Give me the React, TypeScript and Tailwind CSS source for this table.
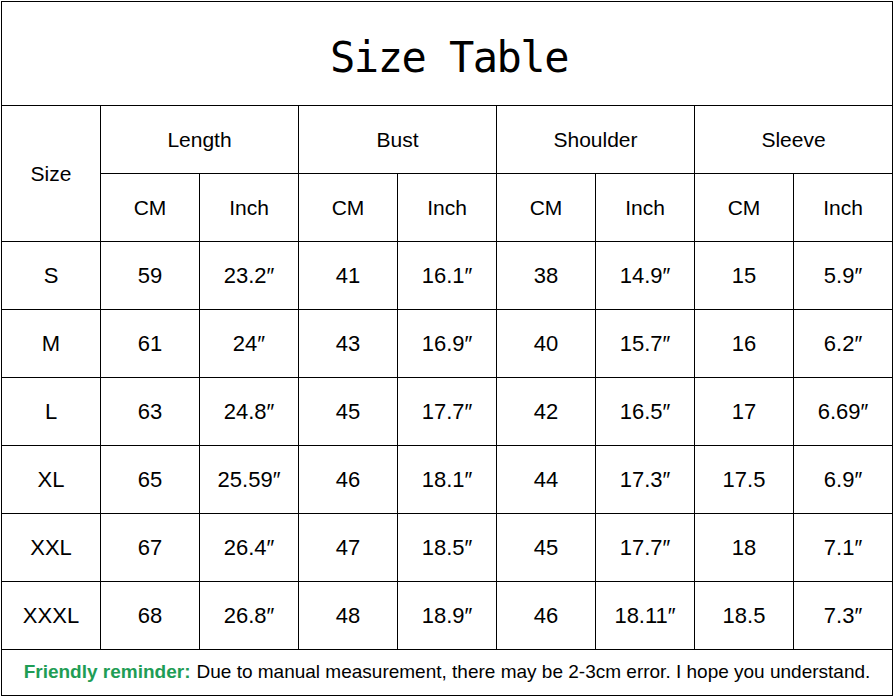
const groups = ["Length", "Bust", "Shoulder", "Sleeve"];

const rows = [
  ["S", "59", "23.2″", "41", "16.1″", "38", "14.9″", "15", "5.9″"],
  ["M", "61", "24″", "43", "16.9″", "40", "15.7″", "16", "6.2″"],
  ["L", "63", "24.8″", "45", "17.7″", "42", "16.5″", "17", "6.69″"],
  ["XL", "65", "25.59″", "46", "18.1″", "44", "17.3″", "17.5", "6.9″"],
  ["XXL", "67", "26.4″", "47", "18.5″", "45", "17.7″", "18", "7.1″"],
  ["XXXL", "68", "26.8″", "48", "18.9″", "46", "18.11″", "18.5", "7.3″"],
];

const cell = "bg-white flex items-center justify-center";

export default function App() {
  return (
    <div className="w-[894px] h-[697px] bg-white pt-px pl-px">
      <div
        className="grid w-[892px] grid-cols-[repeat(9,98px)] grid-rows-[103px_repeat(8,67px)_45px] gap-px bg-black p-px text-black"
        style={{ fontFamily: '"Liberation Sans", Arial, sans-serif' }}
      >
        <div
          className={`${cell} col-span-9 text-[42px] tracking-[-1.5px] pt-2 pl-1`}
          style={{ fontFamily: '"DejaVu Sans Mono", monospace' }}
        >
          Size Table
        </div>

        <div className={`${cell} row-span-2 text-[21px]`}>Size</div>
        {groups.map((g) => (
          <div key={g} className={`${cell} col-span-2 text-[21px]`}>
            {g}
          </div>
        ))}
        {groups.map((g) => (
          <div key={g} className="contents">
            <div className={`${cell} text-[21px]`}>CM</div>
            <div className={`${cell} text-[21px]`}>Inch</div>
          </div>
        ))}

        {rows.map((r) =>
          r.map((v, i) => (
            <div key={r[0] + i} className={`${cell} text-[22px]`}>
              {v}
            </div>
          ))
        )}

        <div className={`${cell} col-span-9 text-[19px]`}>
          <span className="font-bold text-[#1f9d55]">Friendly reminder:</span>
          <span className="ml-1.5">
            Due to manual measurement, there may be 2-3cm error. I hope you understand.
          </span>
        </div>
      </div>
    </div>
  );
}
